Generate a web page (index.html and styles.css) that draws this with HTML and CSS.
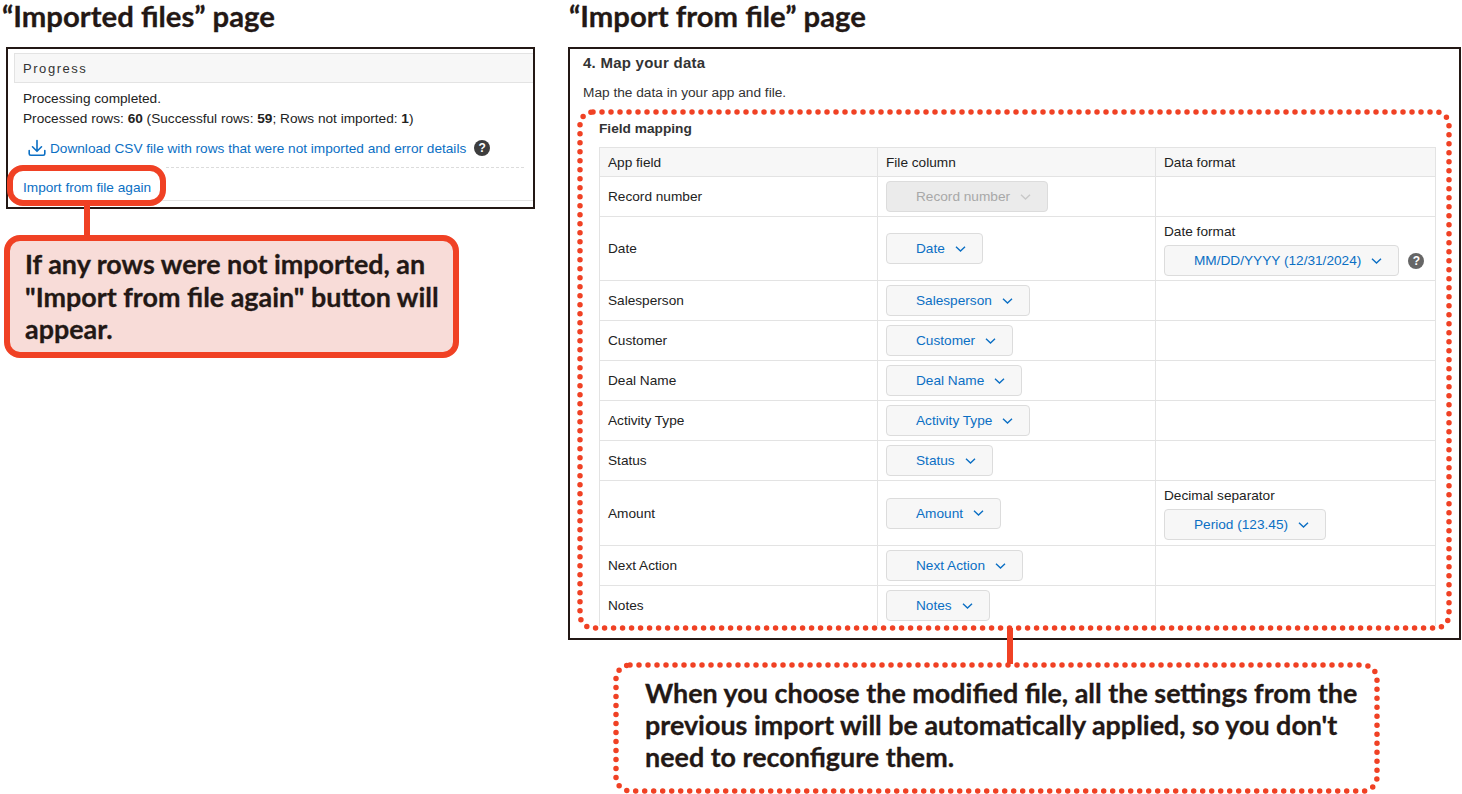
FILE: index.html
```html
<!DOCTYPE html>
<html lang="en">
<head>
<meta charset="utf-8">
<title>Import from file again</title>
<link rel="stylesheet" href="styles.css">
</head>
<body>
<main class="page">
  <section class="col col-left">
    <h1 class="page-title">“Imported files” page</h1>
    <div class="frame frame-left">
      <div class="panel">
        <div class="panel-head">Progress</div>
        <div class="panel-body">
          <div class="line">Processing completed.</div>
          <div class="line">Processed rows: <b>60</b> (Successful rows: <b>59</b>; Rows not imported: <b>1</b>)</div>
          <div class="download">
            <svg class="dl-icon" width="18" height="18" viewBox="0 0 18 18" fill="none" stroke="#0b6fc4" stroke-width="1.6" stroke-linecap="round" stroke-linejoin="round"><path d="M9 1.5V12M4.5 7.8 9 12.3l4.5-4.5"/><path d="M1.2 11.5v3.2c0 1 .6 1.6 1.6 1.6h12.4c1 0 1.6-.6 1.6-1.6v-3.2"/></svg>
            <a class="link">Download CSV file with rows that were not imported and error details</a>
            <span class="help help-dark">?</span>
          </div>
          <div class="dashes"></div>
          <div class="again"><a class="link">Import from file again</a></div>
        </div>
      </div>
      <div class="ring"></div>
    </div>
    <div class="stem stem-left"></div>
    <div class="note-solid">If any rows were not imported, an "Import from file again" button will appear.</div>
  </section>

  <section class="col col-right">
    <h1 class="page-title">“Import from file” page</h1>
    <div class="frame frame-right">
      <h2 class="step">4. Map your data</h2>
      <p class="step-text">Map the data in your app and file.</p>
      <div class="mapping">
        <h3 class="mapping-title">Field mapping</h3>
        <table class="grid">
          <colgroup><col class="c1"><col class="c2"><col class="c3"></colgroup>
          <thead><tr class="r-head"><th>App field</th><th>File column</th><th>Data format</th></tr></thead>
          <tbody>
            <tr class="r"><td>Record number</td><td><span class="sel sel-off">Record number<svg class="chev" width="11" height="6" viewBox="0 0 11 6"><path d="M1 .8l4.5 4.2L10 .8"/></svg></span></td><td></td></tr>
            <tr class="r-tall"><td>Date</td><td><span class="sel">Date<svg class="chev" width="11" height="6" viewBox="0 0 11 6"><path d="M1 .8l4.5 4.2L10 .8"/></svg></span></td>
              <td class="fmt"><div class="fmt-label">Date format</div><div class="fmt-row"><span class="sel">MM/DD/YYYY (12/31/2024)<svg class="chev" width="11" height="6" viewBox="0 0 11 6"><path d="M1 .8l4.5 4.2L10 .8"/></svg></span><span class="help help-grey">?</span></div></td></tr>
            <tr class="r"><td>Salesperson</td><td><span class="sel">Salesperson<svg class="chev" width="11" height="6" viewBox="0 0 11 6"><path d="M1 .8l4.5 4.2L10 .8"/></svg></span></td><td></td></tr>
            <tr class="r"><td>Customer</td><td><span class="sel">Customer<svg class="chev" width="11" height="6" viewBox="0 0 11 6"><path d="M1 .8l4.5 4.2L10 .8"/></svg></span></td><td></td></tr>
            <tr class="r"><td>Deal Name</td><td><span class="sel">Deal Name<svg class="chev" width="11" height="6" viewBox="0 0 11 6"><path d="M1 .8l4.5 4.2L10 .8"/></svg></span></td><td></td></tr>
            <tr class="r"><td>Activity Type</td><td><span class="sel">Activity Type<svg class="chev" width="11" height="6" viewBox="0 0 11 6"><path d="M1 .8l4.5 4.2L10 .8"/></svg></span></td><td></td></tr>
            <tr class="r"><td>Status</td><td><span class="sel">Status<svg class="chev" width="11" height="6" viewBox="0 0 11 6"><path d="M1 .8l4.5 4.2L10 .8"/></svg></span></td><td></td></tr>
            <tr class="r-amount"><td>Amount</td><td><span class="sel">Amount<svg class="chev" width="11" height="6" viewBox="0 0 11 6"><path d="M1 .8l4.5 4.2L10 .8"/></svg></span></td>
              <td class="fmt"><div class="fmt-label">Decimal separator</div><div class="fmt-row"><span class="sel">Period (123.45)<svg class="chev" width="11" height="6" viewBox="0 0 11 6"><path d="M1 .8l4.5 4.2L10 .8"/></svg></span></div></td></tr>
            <tr class="r"><td>Next Action</td><td><span class="sel">Next Action<svg class="chev" width="11" height="6" viewBox="0 0 11 6"><path d="M1 .8l4.5 4.2L10 .8"/></svg></span></td><td></td></tr>
            <tr class="r r-last"><td>Notes</td><td><span class="sel">Notes<svg class="chev" width="11" height="6" viewBox="0 0 11 6"><path d="M1 .8l4.5 4.2L10 .8"/></svg></span></td><td></td></tr>
          </tbody>
        </table>
      </div>
      <svg class="dots dots-map" width="875" height="522" viewBox="0 0 875 522"><rect x="3" y="3" width="869" height="516" rx="13"/></svg>
    </div>
    <div class="stem stem-right"></div>
    <div class="note-dotted">
      <svg class="dots dots-note" width="767" height="132" viewBox="0 0 767 132"><rect x="3" y="3" width="761" height="126" rx="14"/></svg>
      When you choose the modified file, all the settings from the previous import will be automatically applied, so you don't need to reconfigure them.
    </div>
  </section>
</main>
</body>
</html>
```
FILE: styles.css
```css
* { box-sizing: border-box; }
html, body { margin: 0; padding: 0; background: #fff; }
body {
  font-family: "Liberation Sans", Arial, sans-serif;
  font-size: 13.65px;
  line-height: 21px;
  color: #222;
  overflow: hidden;
}
.page { display: flex; width: 1462px; height: 794px; }
.col { display: flex; flex-direction: column; align-items: flex-start; }
.col-left { width: 568px; }
.col-right { width: 894px; }

.page-title {
  margin: 0;
  height: 47px;
  font-family: Lato, sans-serif;
  font-size: 29.3px;
  font-weight: 700;
  line-height: 31px;
  color: #231815;
  white-space: nowrap;
  -webkit-text-stroke: .3px #231815;
}
.col-left .page-title { padding-left: 2px; }
.col-right .page-title { padding-left: 1px; }

.frame { position: relative; border: 2px solid #231815; background: #fff; }
.frame-left { margin-left: 6px; width: 529px; height: 162px; padding: 4px 0 0 6px; }
.frame-right { width: 893px; height: 593px; padding: 4px 0 0 13px; }

.panel { border-top: 1px solid #e3e3e3; border-bottom: 1px solid #e3e3e3; }
.panel-head {
  height: 29px;
  padding-left: 8px;
  border-left: 1px solid #e3e3e3;
  border-bottom: 1px solid #e3e3e3;
  background: #f7f7f7;
  line-height: 29px;
  font-size: 13px;
  letter-spacing: 1.55px;
  color: #333;
}
.panel-body { padding: 5px 0 0 9px; }
.line { height: 20px; white-space: nowrap; }
.download { display: flex; align-items: center; height: 20px; margin-top: 10px; padding-left: 5px; white-space: nowrap; }
.dl-icon { margin-right: 4px; flex: none; }
.link { color: #0b6fc4; }
.help {
  display: inline-block;
  flex: none;
  width: 16px;
  height: 16px;
  border-radius: 50%;
  color: #fff;
  font-size: 12px;
  font-weight: 700;
  line-height: 16px;
  text-align: center;
}
.help-dark { margin-left: 8px; background: #3d3d3d; }
.help-grey { margin-left: 9px; background: #666; }
.dashes { margin: 9px 9px 0 143px; border-top: 1px dashed #dcdcdc; }
.again { height: 32px; padding-top: 9px; }
.ring {
  position: absolute;
  left: -1px;
  top: 116px;
  width: 159px;
  height: 41px;
  border: 6px solid #f04124;
  border-radius: 16px;
}

.stem { position: relative; width: 6px; background: #f04124; }
.stem-left { margin: -3px 0 0 84px; height: 29px; }
.stem-right { margin: -12px 0 -2px 439px; height: 36px; }

.note-solid {
  margin-left: 4px;
  width: 455px;
  height: 123px;
  padding: 7px 10px 0 15px;
  border: 6px solid #f04124;
  border-radius: 16px;
  background: #f8dcd8;
  font-family: Lato, sans-serif;
  font-size: 26.9px;
  font-weight: 700;
  line-height: 32.5px;
  color: #231815;
  -webkit-text-stroke: .3px #231815;
}

.step { margin: 0; font-size: 15px; font-weight: 700; line-height: 20px; color: #333; letter-spacing: .25px; }
.step-text { margin: 10px 0 0; font-size: 13.7px; line-height: 20px; color: #333; }
.mapping { margin: 16px 0 0 16px; }
.mapping-title { margin: 0 0 8px; font-size: 13.7px; font-weight: 700; line-height: 20px; color: #333; }

.grid { width: 836px; table-layout: fixed; border-collapse: collapse; }
.c1, .c2 { width: 278px; }
.c3 { width: 280px; }
.grid th, .grid td { padding: 0 8px; border: 1px solid #e3e3e3; font-weight: 400; text-align: left; vertical-align: middle; }
.r-head { height: 29px; background: #f7f7f7; }
.r { height: 40px; }
.r-tall { height: 64px; }
.r-amount { height: 65px; }
.r-last td { border-bottom: 0; }
.grid td.fmt { padding-top: 4px; vertical-align: top; }
.fmt-label { height: 20px; }
.fmt-row { display: flex; align-items: center; margin-top: 4px; }

.sel {
  display: inline-flex;
  align-items: center;
  gap: 10px;
  height: 31px;
  padding: 0 16px 0 29px;
  border: 1px solid #dcdcdc;
  border-radius: 4px;
  background: #f7f7f7;
  color: #0b6fc4;
  white-space: nowrap;
  vertical-align: middle;
}
.chev { flex: none; fill: none; stroke: #0b6fc4; stroke-width: 1.4; }
.sel-off { background: #ebebeb; color: #a8a8a8; }
.sel-off .chev { stroke: #c8c8c8; }

.dots { position: absolute; display: block; fill: none; stroke: #f04124; stroke-width: 5.5; stroke-linecap: round; stroke-dasharray: 0 9; }
.dots-map { left: 7px; top: 60px; }
.dots-note { left: 0; top: 0; }

.note-dotted {
  position: relative;
  margin-left: 45px;
  width: 767px;
  height: 132px;
  padding: 15px 10px 0 32px;
  font-family: Lato, sans-serif;
  font-size: 26.9px;
  font-weight: 700;
  line-height: 32px;
  color: #231815;
  -webkit-text-stroke: .3px #231815;
}
```
